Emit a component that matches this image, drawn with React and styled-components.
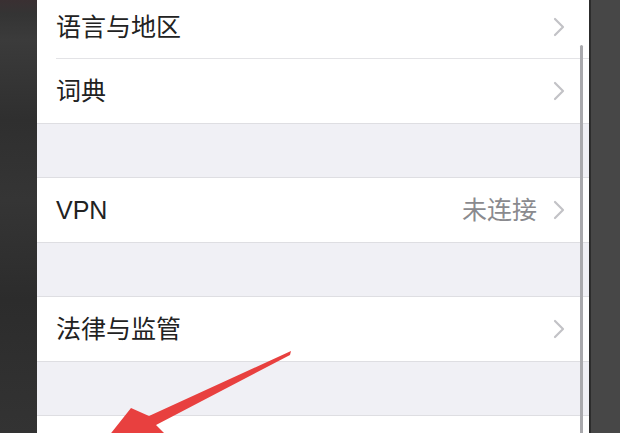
import React from 'react';
import styled, { createGlobalStyle } from 'styled-components';

const GlobalStyle = createGlobalStyle`
  html, body {
    margin: 0;
    padding: 0;
    background: #333;
  }
`

const Screen = styled.div`
  position: relative;
  width: 620px;
  height: 433px;
  overflow: hidden;
  display: flex;
  font-family: "Liberation Sans", "Noto Sans CJK SC", sans-serif;
`

/* blurred dark page behind the settings sheet */
const LeftStrip = styled.div`
  width: 37px;
  flex-shrink: 0;
  background: linear-gradient(180deg, #3a3032 0px, #343434 14px, #3b3b3b 40px, #2f2f2f 120px, #353535 200px, #2c2c2c 300px, #333 433px);
`

const RightStrip = styled.div`
  width: 31px;
  flex-shrink: 0;
  background: #474747;
  border-left: 2px solid #2c2c2c;
  box-sizing: border-box;
`

const Panel = styled.div`
  position: relative;
  flex: 1;
  background: #f0f0f5;
  overflow: hidden;
`

const Group = styled.div`
  background: #fff;
  border-top: 1px solid #dedee2;
  border-bottom: 1px solid #dedee2;
  margin-top: ${p => p.$first ? '-6px' : '0'};
`

const Gap = styled.div`
  height: 53px;
`

const Row = styled.div`
  height: 64px;
  display: flex;
  align-items: center;
  padding: 0 24px 0 19px;
  box-sizing: border-box;
  position: relative;
  ${p => p.$divider && `
    &::after {
      content: '';
      position: absolute;
      left: 19px;
      right: 0;
      bottom: 0;
      height: 1px;
      background: #e3e3e6;
    }
  `}
`

const Label = styled.span`
  flex: 1;
  font-size: 25px;
  line-height: 30px;
  color: #222;
`

const Value = styled.span`
  font-size: 25px;
  line-height: 30px;
  color: #8a8a8e;
  margin-right: 16px;
`

const Scrollbar = styled.div`
  position: absolute;
  right: 6px;
  top: 45px;
  bottom: -10px;
  width: 3px;
  border-radius: 2px;
  background: #a9a9ad;
`

const ArrowLayer = styled.svg`
  position: absolute;
  left: 0;
  top: 0;
  pointer-events: none;
`

const Chevron = () => (
  <svg width="12" height="20" viewBox="0 0 12 20">
    <path d="M2 2 L10 10 L2 18" fill="none" stroke="#c2c2c6" strokeWidth="2.2" strokeLinecap="round" strokeLinejoin="round" />
  </svg>
)

function SettingRow({ label, value, divider }) {
  return (
    <Row $divider={divider}>
      <Label>{label}</Label>
      {value && <Value>{value}</Value>}
      <Chevron />
    </Row>
  )
}

function App() {
  return (
    <>
      <GlobalStyle />
      <Screen>
        <LeftStrip />
        <Panel>
          <Group $first>
            <SettingRow label="语言与地区" divider />
            <SettingRow label="词典" />
          </Group>
          <Gap />
          <Group>
            <SettingRow label="VPN" value="未连接" />
          </Group>
          <Gap />
          <Group>
            <SettingRow label="法律与监管" />
          </Group>
          <Gap />
          <Group>
            <Row />
          </Group>
          <Scrollbar />
        </Panel>
        <RightStrip />
        <ArrowLayer width="620" height="433" viewBox="0 0 620 433">
          <polygon
            points="291,351 149,416 131,408 104,442 165,434 156,425 290,355"
            fill="#e8403f"
          />
        </ArrowLayer>
      </Screen>
    </>
  )
}

export default App;
